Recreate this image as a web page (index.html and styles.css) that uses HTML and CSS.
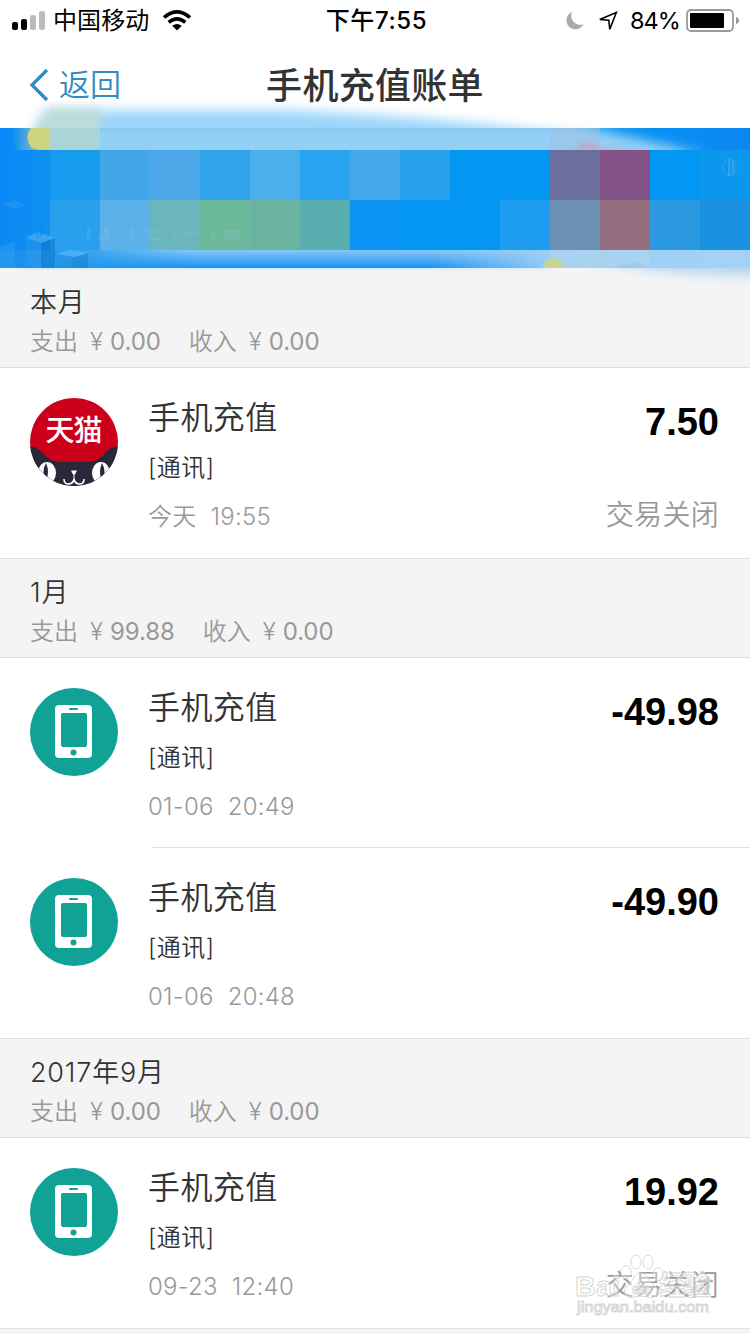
FILE: index.html
```html
<!DOCTYPE html>
<html lang="zh-CN">
<head>
<meta charset="utf-8">
<title>手机充值账单</title>
<link rel="stylesheet" href="styles.css">
</head>
<body>
<svg class="defs" width="0" height="0">
  <symbol id="phone" viewBox="0 0 88 88">
    <circle cx="44" cy="44" r="44" fill="#10a294"/>
    <rect x="25" y="17" width="37" height="53" rx="4" fill="#fff"/>
    <rect x="31" y="25" width="26" height="34" rx="2" fill="#10a294"/>
    <rect x="39" y="20" width="9" height="2" rx="1" fill="#10a294"/>
    <circle cx="43.5" cy="64.500" r="3" fill="#10a294"/>
  </symbol>
</svg>
<div class="screen">
  <div class="status">
    <div class="status-left">
      <svg class="signal" width="34" height="22" viewBox="0 0 34 22"><rect x="0" y="12" width="6" height="8" rx="2"/><rect x="9" y="9" width="6" height="11" rx="2"/><rect x="18" y="5" width="6" height="15" rx="2" fill="#bbb"/><rect x="27" y="1" width="6" height="19" rx="2" fill="#bbb"/></svg>
      <span class="carrier">中国移动</span>
      <svg class="wifi" width="30" height="22" viewBox="0 0 30 22" fill="none" stroke="#000" stroke-width="3.600"><path d="M2 7.500Q15-3.800 28 7.500"/><path d="M6.700 12.300Q15 5.300 23.300 12.300"/><path d="M15 20.500L10.200 15.700Q15 12.200 19.800 15.700Z" fill="#000" stroke="none"/></svg>
    </div>
    <div class="clock">下午7:55</div>
    <div class="status-right">
      <svg class="moon" width="19" height="20" viewBox="0 0 19 20"><path d="M6 1A9 9 0 1 0 17.500 13.300A9.200 9.200 0 0 1 6 1Z" fill="#aaa"/></svg>
      <svg class="arrow" width="20" height="20" viewBox="0 0 20 20"><path d="M1.800 8.500L18.300 1.500L11.800 18.300L10.800 9.200Z" fill="none" stroke="#000" stroke-width="1.600" stroke-linejoin="miter"/></svg>
      <span class="percent">84%</span>
      <svg class="battery" width="53" height="24" viewBox="0 0 53 24"><rect x="1" y="1" width="46" height="21" rx="4" fill="none" stroke="#999" stroke-width="1.800"/><rect x="4" y="4" width="34" height="15" rx="1"/><path d="M50 8Q53 9 53 11.500T50 15Z" fill="#999"/></svg>
    </div>
  </div>
  <div class="nav">
    <div class="back"><svg width="20" height="34" viewBox="0 0 20 34"><path d="M18 2L3 17L18 32" fill="none" stroke="#338bc4" stroke-width="3.300"/></svg><span>返回</span></div>
    <div class="nav-title">手机充值账单</div>
  </div>
  <div class="banner">
    <svg class="banner-art" width="750" height="190" viewBox="0 100 750 190">
      <defs>
        <linearGradient id="sky" x1="0" x2="1" y1="0" y2="0"><stop offset="0" stop-color="#0788f6"/><stop offset=".12" stop-color="#1598ef"/><stop offset=".8" stop-color="#0596f2"/><stop offset="1" stop-color="#0b86f3"/></linearGradient>
        <linearGradient id="low" x1="0" x2="0" y1="0" y2="1"><stop offset="0" stop-color="#85c8f8"/><stop offset="1" stop-color="#1991f2"/></linearGradient>
        <linearGradient id="lowRight" x1="0" x2="1" y1="0" y2="0"><stop offset="0" stop-color="#9bd0f5" stop-opacity="0"/><stop offset=".4" stop-color="#9bd0f5"/><stop offset="1" stop-color="#a3d2f5"/></linearGradient>
        <linearGradient id="lowLeft" x1="0" x2="1" y1="0" y2="0"><stop offset="0" stop-color="#158bec"/><stop offset=".3" stop-color="#249bee"/><stop offset="1" stop-color="#249bee" stop-opacity="0"/></linearGradient>
        <linearGradient id="sunGlow" x1="0" x2="1" y1="0" y2="0"><stop offset="0" stop-color="#c9dc9a" stop-opacity="0"/><stop offset="1" stop-color="#cfdc8c"/></linearGradient>
        <linearGradient id="tile" x1="0" x2="0" y1="0" y2="1"><stop offset="0" stop-color="#b7dcdc" stop-opacity="0"/><stop offset="1" stop-color="#b7dcdc" stop-opacity=".8"/></linearGradient>
        <filter id="soft" filterUnits="userSpaceOnUse" x="-50" y="60" width="850" height="280"><feGaussianBlur stdDeviation="6"/></filter>
        <filter id="wide" filterUnits="userSpaceOnUse" x="-50" y="60" width="850" height="280"><feGaussianBlur stdDeviation="14 5"/></filter>
        <filter id="fine" filterUnits="userSpaceOnUse" x="-50" y="60" width="850" height="280"><feGaussianBlur stdDeviation="2"/></filter>
        <clipPath id="above"><rect y="100" width="750" height="28"/></clipPath>
        <clipPath id="below"><rect y="268" width="750" height="22"/></clipPath>
        <clipPath id="inside"><rect y="128" width="750" height="22"/></clipPath>
      </defs>
      <g clip-path="url(#above)">
        <path d="M45 110H280Q400 115 500 126L590 136V150H25Z" fill="#9bd5fb" filter="url(#soft)"/>
        <path d="M46 110H100V150H26Z" fill="#d0e0c4" opacity=".7" filter="url(#soft)"/>
        <rect x="50" y="102" width="50" height="26" fill="url(#tile)"/>
      </g>
      <rect y="128" width="750" height="140" fill="url(#sky)"/>
      <g clip-path="url(#inside)">
        <path d="M40 110H520L610 132L690 150V170H40Z" fill="#93d0f6" filter="url(#wide)"/>
        <rect x="100" y="127" width="470" height="4" fill="#72bde9" opacity=".5" filter="url(#fine)"/>
        <rect x="12" y="128" width="38" height="22" fill="url(#sunGlow)" opacity=".7"/>
        <path d="M50 128H31Q24 138 31 147Q38 151 50 149Z" fill="#cdd67c"/>
        <rect x="50" y="128" width="50" height="22" fill="#a9d5d7"/>
        <rect x="550" y="128" width="50" height="22" fill="#a9bcdf" opacity=".45"/>
        <path d="M575 150Q584 136 600 147L650 150Z" fill="#d194b3" opacity=".6" filter="url(#fine)"/>
      </g>
      <g shape-rendering="crispEdges">
        <rect x="50" y="150" width="50" height="50" fill="#179def"/><rect x="100" y="150" width="50" height="50" fill="#42a7e9"/><rect x="150" y="150" width="50" height="50" fill="#4ba7e8"/><rect x="200" y="150" width="50" height="50" fill="#2fa4eb"/><rect x="250" y="150" width="50" height="50" fill="#4aafeb"/><rect x="300" y="150" width="50" height="50" fill="#28a3f1"/><rect x="350" y="150" width="50" height="50" fill="#42a8eb"/><rect x="400" y="150" width="50" height="50" fill="#29a0ec"/><rect x="450" y="150" width="100" height="50" fill="#0497f2"/><rect x="550" y="150" width="50" height="50" fill="#6c709f"/><rect x="600" y="150" width="50" height="50" fill="#845286"/><rect x="650" y="150" width="50" height="50" fill="#0297f4"/><rect x="700" y="150" width="50" height="50" fill="#0c97ef"/>
        <rect x="50" y="200" width="50" height="50" fill="#299fee"/><rect x="100" y="200" width="50" height="50" fill="#5db1e9"/><rect x="150" y="200" width="50" height="50" fill="#6bb5bd"/><rect x="200" y="200" width="50" height="50" fill="#6cb89a"/><rect x="250" y="200" width="50" height="50" fill="#6ab49f"/><rect x="300" y="200" width="50" height="50" fill="#5aaeb0"/><rect x="350" y="200" width="50" height="50" fill="#0d92f6"/><rect x="400" y="200" width="100" height="50" fill="#0396f3"/><rect x="500" y="200" width="50" height="50" fill="#1d9cf0"/><rect x="550" y="200" width="50" height="50" fill="#6c90b3"/><rect x="600" y="200" width="50" height="50" fill="#956f80"/><rect x="650" y="200" width="50" height="50" fill="#2a99df"/><rect x="700" y="200" width="50" height="50" fill="#1b92e1"/>
      </g>
      <rect y="250" width="750" height="18" fill="url(#low)"/>
      <rect x="430" y="250" width="320" height="18" fill="url(#lowRight)"/>
      <rect y="250" width="190" height="18" fill="url(#lowLeft)"/>
      <rect x="550" y="250" width="100" height="18" fill="#b6d5e8" opacity=".45"/>
      <g opacity=".35">
        <path d="M3 205L14 200L26 205L14 209Z" fill="#47a3f1"/><path d="M3 205L14 209L26 205V268H3Z" fill="#238ce5" opacity=".35"/>
        <path d="M25 238L38 232L55 238L41 243Z" fill="#8ccbfa"/><path d="M25 238L41 243V268H25Z" fill="#3599eb"/><path d="M41 243L55 238V268H41Z" fill="#0763b3"/><path d="M38 226V236M41 225V236" stroke="#1478ce"/>
        <path d="M56 254L70 250L89 253L76 257Z" fill="#8acbfa"/><path d="M56 254L72 258V268H56Z" fill="#238bdc"/><path d="M72 258L88 253V268H72Z" fill="#1270b9"/>
        <path d="M0 247L15 241V268H0Z" fill="#3ba8f6"/>
      </g>
      <g fill="#8bc6df" opacity=".2"><path d="M87 228H90V241H87ZM104 228H109V241H104ZM98 237H106V241H98ZM130 229H134V241H130ZM145 230H158V233H145ZM148 237H161V240H148ZM172 231H175V241H172ZM184 232H198V236H184ZM211 232H215V241H211ZM224 230H240V239H224Z"/></g>
      <g fill="none" stroke="#5dadec" stroke-width="2"><ellipse cx="729.500" cy="167" rx="6.500" ry="8.500" opacity=".25"/><path d="M729 159V176M732 160Q734 167 732 174" opacity=".5"/></g>
      <path d="M543 268Q544 258 553 258Q563 259 563 268Z" fill="#c8d493"/>
      <path d="M610 268L635 262L650 268Z" fill="#65aee3" opacity=".2"/>
      <g clip-path="url(#below)">
        <rect x="20" y="258" width="530" height="11" fill="#cdeafb" filter="url(#fine)"/>
        <path d="M560 254H800V274Q710 278 640 268Z" fill="#b0d5f1" filter="url(#soft)"/>
      </g>
    </svg>
  </div>

  <div class="month"><div class="month-name">本月</div><div class="sum"><span>支出</span><i>¥</i><b>0.00</b><span class="in">收入</span><i>¥</i><b>0.00</b></div></div>
  <div class="row">
    <svg class="icon" width="88" height="88" viewBox="0 0 88 88">
      <defs><clipPath id="round"><circle cx="44" cy="44" r="44"/></clipPath></defs>
      <g clip-path="url(#round)">
        <rect width="88" height="88" fill="#cc001b"/>
        <path d="M0 48Q7 49 13 55Q20 64 32 64H56Q69 64 76 54Q81 49 88 48V88H0Z" fill="#292838"/>
        <ellipse cx="17" cy="75" rx="9" ry="11" fill="#fff"/><path d="M5 70Q9 68 12 77L24 92H0Z" fill="#fff"/><path d="M16 65Q20 74 16 83Q11 74 16 65Z" fill="#292838"/>
        <ellipse cx="71" cy="75" rx="9" ry="11" fill="#fff"/><path d="M83 70Q79 68 76 77L64 92H88Z" fill="#fff"/><path d="M72 65Q68 74 72 83Q77 74 72 65Z" fill="#292838"/>
        <path d="M41 72.500H47L45 76.500H43ZM43.500 76H44.500V82H43.500Z" fill="#fff"/>
        <path d="M34 81Q34 86 38.500 86Q43 86 44 81Q45 86 49.500 86Q54 86 54 81" fill="none" stroke="#fff" stroke-width="1.600"/>
      </g>
      <text class="tmall" x="15.500" y="42.500" textLength="57">天猫</text>
    </svg>
    <div class="info"><div class="name">手机充值</div><div class="tag">[通讯]</div><div class="date"><span>今天</span><span>19:55</span></div></div>
    <div class="side"><div class="amount">7.50</div><div class="state">交易关闭</div></div>
  </div>

  <div class="month"><div class="month-name">1月</div><div class="sum"><span>支出</span><i>¥</i><b>99.88</b><span class="in">收入</span><i>¥</i><b>0.00</b></div></div>
  <div class="row divided">
    <svg class="icon" width="88" height="88"><use href="#phone"/></svg>
    <div class="info"><div class="name">手机充值</div><div class="tag">[通讯]</div><div class="date"><span>01-06</span><span>20:49</span></div></div>
    <div class="side"><div class="amount">-49.98</div></div>
  </div>
  <div class="row">
    <svg class="icon" width="88" height="88"><use href="#phone"/></svg>
    <div class="info"><div class="name">手机充值</div><div class="tag">[通讯]</div><div class="date"><span>01-06</span><span>20:48</span></div></div>
    <div class="side"><div class="amount">-49.90</div></div>
  </div>

  <div class="month"><div class="month-name">2017年9月</div><div class="sum"><span>支出</span><i>¥</i><b>0.00</b><span class="in">收入</span><i>¥</i><b>0.00</b></div></div>
  <div class="row">
    <svg class="icon" width="88" height="88"><use href="#phone"/></svg>
    <div class="info"><div class="name">手机充值</div><div class="tag">[通讯]</div><div class="date"><span>09-23</span><span>12:40</span></div></div>
    <div class="side"><div class="amount">19.92</div><div class="state">交易关闭</div></div>
    <svg class="watermark" width="150" height="72" viewBox="0 0 150 72">
      <g fill="#fff" fill-opacity=".35" stroke="#d4d4d4" stroke-width=".9">
        <text class="wm-big" x="2" y="44" textLength="45" lengthAdjust="spacingAndGlyphs">Bai</text><text class="wm-big" x="86" y="43" textLength="52">经验</text>
        <ellipse cx="63" cy="10" rx="5" ry="7"/><ellipse cx="75" cy="10" rx="5" ry="7"/><ellipse cx="53" cy="20" rx="5" ry="6.500"/><ellipse cx="85" cy="22" rx="5" ry="6.500"/>
        <path d="M68 21C75 21 76 30 82 34C89 41 82 48 75 45Q68 43 61 45C52 47 48 39 55 33C61 29 60 21 68 21Z"/>
        <text class="wm-du" x="59" y="42">du</text>
        <text class="wm-url" x="4" y="60" textLength="132" lengthAdjust="spacingAndGlyphs">jingyan.baidu.com</text>
      </g>
    </svg>
  </div>
  <div class="month"></div>
</div>
</body>
</html>
```
FILE: styles.css
```css
* { box-sizing: border-box; }
body { margin: 0; background: #fff; }
.screen { width: 750px; height: 1334px; overflow: hidden; font-family: Inter, "Noto Sans CJK SC", sans-serif; color: #333; }
.defs { display: block; position: absolute; }
svg { display: block; flex: none; }

.status { height: 40px; padding: 1px 11px 0 12px; display: grid; grid-template-columns: 1fr auto 1fr; align-items: center; color: #000; font-size: 24px; line-height: 40px; white-space: nowrap; }
.status-left, .status-right { display: flex; align-items: center; }
.status-right { justify-content: flex-end; }
.carrier { margin-left: 7px; letter-spacing: 0.1px; }
.wifi { margin-left: 13px; }
.clock { font-weight: 500; letter-spacing: 0.6px; transform: translateX(1px); }
.arrow { margin-left: 13px; }
.percent { margin: 0 6px 0 12px; font-size: 23.500px; letter-spacing: -0.9px; }

.nav { height: 88px; padding: 2px 29px 0; display: grid; grid-template-columns: 1fr auto 1fr; align-items: center; line-height: 86px; }
.back { display: flex; align-items: center; gap: 10px; font-size: 31px; font-weight: 350; color: #338bc4; margin-top: -2px; }
.nav-title { font-size: 36px; font-weight: 500; letter-spacing: 0.3px; padding-top: 1px; }

.banner { height: 140px; position: relative; z-index: 1; }
.banner-art { position: absolute; left: 0; top: -28px; }

.month { height: 100px; padding: 15px 30px 0; background: #f4f4f4; border-top: 1px solid #e2e2e2; border-bottom: 1px solid #dedede; white-space: nowrap; }
.banner + .month { border-top-color: #f4f4f4; }
.month-name { font-size: 27px; line-height: 38px; letter-spacing: 0.8px; font-weight: 350; }
.sum { display: flex; font-size: 24px; line-height: 40px; color: #999; }
.sum span { font-weight: 350; }
.sum i { font-style: normal; width: 20px; margin-left: 12px; font-weight: 350; }
.sum b { font-weight: 400; letter-spacing: -0.1px; }
.sum .in { margin-left: 28px; }

.row { height: 190px; padding: 30px 31px 0 30px; display: flex; background: #fff; position: relative; }
.info { margin-left: 30px; flex: 1; white-space: nowrap; }
.name { font-size: 32px; line-height: 40px; letter-spacing: 0.4px; font-weight: 350; }
.tag { margin-top: 10px; font-size: 24px; line-height: 40px; letter-spacing: 0.5px; font-weight: 350; }
.date { margin-top: 9px; display: flex; gap: 14px; font-size: 24px; line-height: 40px; color: #999; letter-spacing: 0.25px; font-weight: 350; }
.side { text-align: right; white-space: nowrap; }
.amount { font: bold 38px/48px "Liberation Sans", Arial, sans-serif; color: #000; }
.state { margin-top: 48px; padding-top: 1px; font-size: 28px; font-weight: 350; line-height: 40px; color: #999; letter-spacing: 0.3px; }
.divided { background: linear-gradient(#e2e2e2, #e2e2e2) 152px 189px / 598px 1px no-repeat #fff; }
.tmall { font: 500 29px "Noto Sans CJK SC", sans-serif; fill: #fff; }

.watermark { position: absolute; left: 573px; top: 114px; }
.wm-big { font: bold 27px "Liberation Sans", "Noto Sans CJK SC", sans-serif; }
.wm-du { font: bold 14px "Liberation Sans", Arial, sans-serif; }
.wm-url { font: 15px "Liberation Sans", Arial, sans-serif; }
```
